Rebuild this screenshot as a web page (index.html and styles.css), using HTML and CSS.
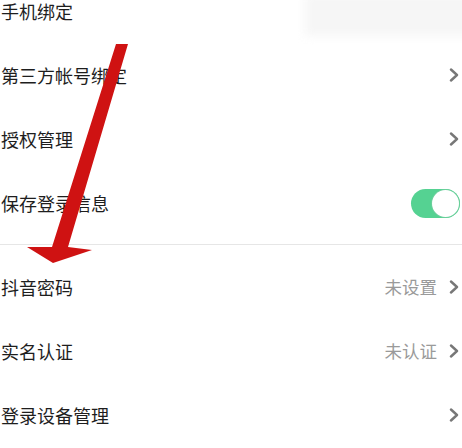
FILE: index.html
```html
<!DOCTYPE html>
<html lang="zh-CN">
<head>
<meta charset="utf-8">
<title>账号与安全</title>
<link rel="stylesheet" href="styles.css">
</head>
<body>
<div class="page">
  <div class="smudge"></div>
  <div class="list">
    <div class="row row-first"><span class="label">手机绑定</span></div>
    <div class="row"><span class="label">第三方帐号绑定</span>
      <svg class="chev" viewBox="0 0 10 14"><polyline points="2,1.5 8,7 2,12.5"/></svg></div>
    <div class="row"><span class="label">授权管理</span>
      <svg class="chev" viewBox="0 0 10 14"><polyline points="2,1.5 8,7 2,12.5"/></svg></div>
    <div class="row"><span class="label">保存登录信息</span>
      <span class="toggle"><span class="knob"></span></span></div>
  </div>
  <div class="divider"></div>
  <div class="list">
    <div class="row"><span class="label">抖音密码</span>
      <span class="right"><span class="status">未设置</span>
      <svg class="chev" viewBox="0 0 10 14"><polyline points="2,1.5 8,7 2,12.5"/></svg></span></div>
    <div class="row"><span class="label">实名认证</span>
      <span class="right"><span class="status">未认证</span>
      <svg class="chev" viewBox="0 0 10 14"><polyline points="2,1.5 8,7 2,12.5"/></svg></span></div>
    <div class="row"><span class="label">登录设备管理</span>
      <svg class="chev" viewBox="0 0 10 14"><polyline points="2,1.5 8,7 2,12.5"/></svg></div>
  </div>
  <svg class="arrow" viewBox="0 0 462 448" width="462" height="448">
    <polygon points="116,44 128,44 68,247 92,250 53,263 27,247 52,247"/>
  </svg>
</div>
</body>
</html>
```

FILE: styles.css
```css
html, body {
  margin: 0;
  padding: 0;
  background: #ffffff;
}
body {
  width: 462px;
  height: 448px;
  overflow: hidden;
  font-family: "Noto Sans CJK SC", "Noto Sans", sans-serif;
}
.page {
  position: relative;
  width: 462px;
  height: 448px;
  overflow: hidden;
}
.smudge {
  position: absolute;
  left: 305px;
  top: -6px;
  width: 170px;
  height: 42px;
  background: #f6f6f6;
  filter: blur(5px);
}
.list {
  display: flex;
  flex-direction: column;
}
.row {
  height: 64px;
  display: flex;
  align-items: center;
  justify-content: space-between;
  padding: 0 3px 0 1px;
  position: relative;
}
.row-first {
  height: 43px;
  align-items: flex-start;
  padding-top: 1px;
  box-sizing: border-box;
}
.label {
  font-size: 18px;
  line-height: 20px;
  color: #1e1e1e;
}
.right {
  display: flex;
  align-items: center;
  gap: 12px;
}
.status {
  font-size: 17.5px;
  line-height: 20px;
  color: #9a9a9a;
}
.chev {
  width: 10px;
  height: 14px;
}
.chev polyline {
  fill: none;
  stroke: #777777;
  stroke-width: 2.4;
  stroke-linecap: round;
  stroke-linejoin: round;
}
.toggle {
  width: 49px;
  height: 29px;
  border-radius: 15px;
  background: #55d292;
  display: flex;
  align-items: center;
  justify-content: flex-end;
  padding: 0 1px;
  box-sizing: border-box;
  margin-right: -1px;
}
.knob {
  width: 27px;
  height: 27px;
  border-radius: 50%;
  background: #ffffff;
  box-shadow: 0 0 0 1px #6ccf9c;
}
.divider {
  height: 1px;
  background: #e6e6e6;
  margin: 9px 0 10px;
}
.arrow {
  position: absolute;
  left: 0;
  top: 0;
  pointer-events: none;
}
.arrow polygon {
  fill: #cf1212;
}
```
